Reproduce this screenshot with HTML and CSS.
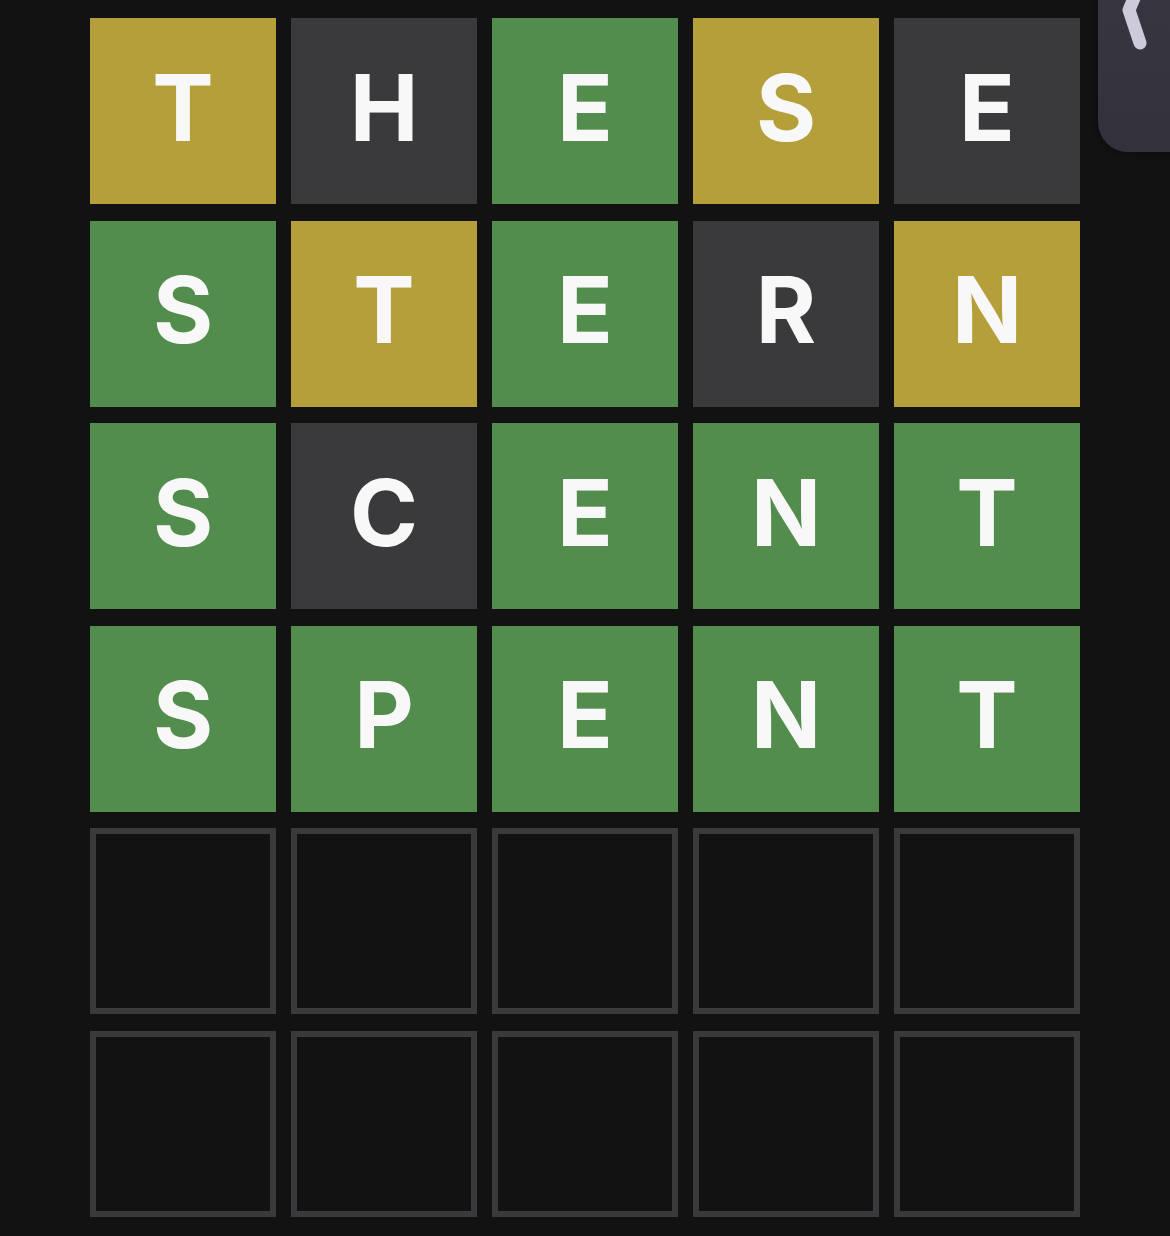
FILE: index.html
```html
<!DOCTYPE html>
<html lang="en">
<head>
<meta charset="utf-8">
<title>Wordle board</title>
<link rel="stylesheet" href="styles.css">
</head>
<body>
<main class="board">
  <div class="tile present">T</div>
  <div class="tile absent">H</div>
  <div class="tile correct">E</div>
  <div class="tile present">S</div>
  <div class="tile absent">E</div>

  <div class="tile correct">S</div>
  <div class="tile present">T</div>
  <div class="tile correct">E</div>
  <div class="tile absent">R</div>
  <div class="tile present">N</div>

  <div class="tile correct">S</div>
  <div class="tile absent">C</div>
  <div class="tile correct">E</div>
  <div class="tile correct">N</div>
  <div class="tile correct">T</div>

  <div class="tile correct">S</div>
  <div class="tile correct">P</div>
  <div class="tile correct">E</div>
  <div class="tile correct">N</div>
  <div class="tile correct">T</div>

  <div class="tile empty"></div>
  <div class="tile empty"></div>
  <div class="tile empty"></div>
  <div class="tile empty"></div>
  <div class="tile empty"></div>

  <div class="tile empty"></div>
  <div class="tile empty"></div>
  <div class="tile empty"></div>
  <div class="tile empty"></div>
  <div class="tile empty"></div>
</main>
<div class="side-tab">
  <svg class="chevron" width="72" height="60" viewBox="0 0 72 60">
    <polyline points="42,-16 31,10 42,43" fill="none" stroke="#cdcadb" stroke-width="13" stroke-linecap="round" stroke-linejoin="round"/>
  </svg>
</div>
</body>
</html>
```

FILE: styles.css
```css
html, body {
  margin: 0;
  padding: 0;
  background: #121213;
}

body {
  width: 1170px;
  height: 1236px;
  overflow: hidden;
  position: relative;
  font-family: Inter, "Liberation Sans", Arial, sans-serif;
}

.board {
  display: grid;
  grid-template-columns: repeat(5, 186px);
  grid-auto-rows: 186px;
  column-gap: 15px;
  row-gap: 16.6px;
  padding: 18px 0 0 90px;
}

.tile {
  display: flex;
  align-items: center;
  justify-content: center;
  box-sizing: border-box;
  padding-bottom: 7px;
  color: #f8f8f8;
  font-size: 92px;
  font-weight: 700;
  line-height: 1;
}

.present {
  background: #b59f3b;
}

.correct {
  background: #538d4e;
}

.absent {
  background: #3a3a3c;
}

.empty {
  border: 6px solid #3a3a3c;
  background: #121213;
}

.side-tab {
  position: absolute;
  top: 0;
  left: 1098px;
  width: 90px;
  height: 152px;
  border-bottom-left-radius: 30px;
  background: linear-gradient(180deg, #37353f 0%, #33313b 100%);
  box-shadow: 0 0 6px rgba(0, 0, 0, 0.5);
}

.chevron {
  display: block;
}
```
